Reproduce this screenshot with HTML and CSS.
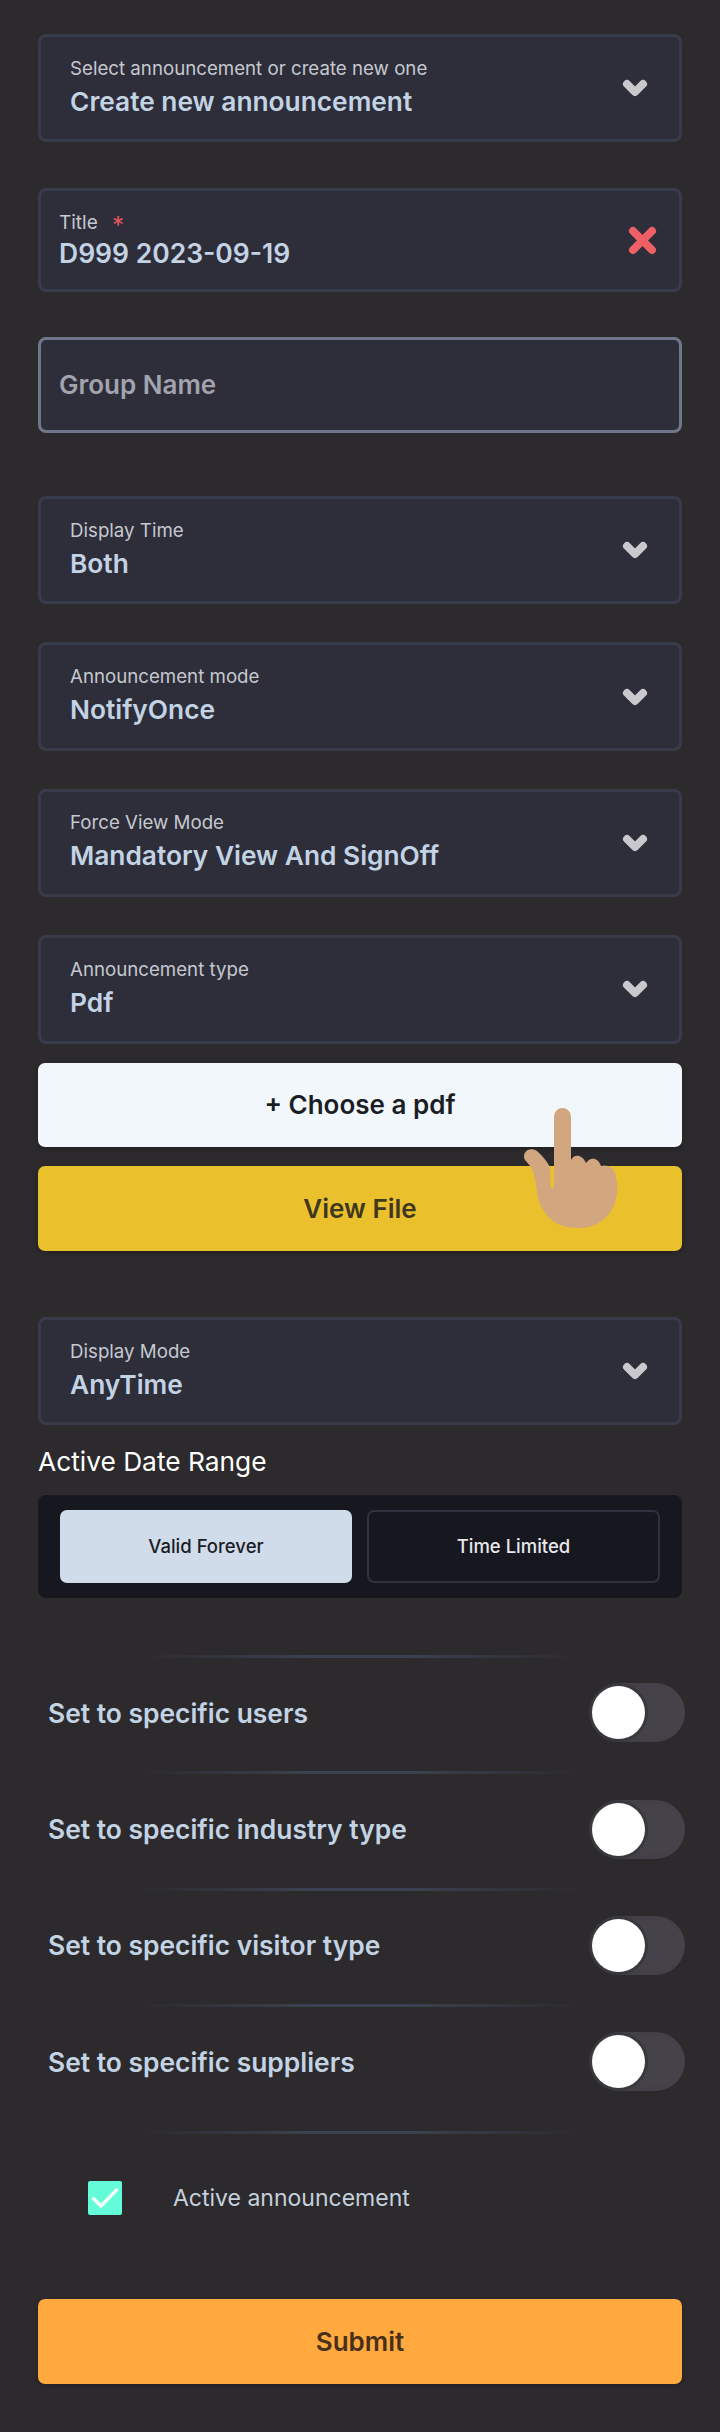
FILE: index.html
```html
<!DOCTYPE html>
<html lang="en">
<head>
<meta charset="utf-8">
<title>Announcement</title>
<link rel="stylesheet" href="styles.css">
</head>
<body>
<main class="form">
  <div class="field select">
    <div class="stack"><span class="label">Select announcement or create new one</span><span class="value">Create new announcement</span></div>
    <svg class="chev" viewBox="0 0 26 18"><path d="M5 5l8 8 8-8"/></svg>
  </div>
  <div class="field input mt45">
    <div class="stack"><span class="label">Title <span class="req">*</span></span><span class="value">D999 2023-09-19</span></div>
    <svg class="clear" viewBox="0 0 29 29"><path d="M5 5l19 19M24 5L5 24"/></svg>
  </div>
  <div class="field group mt45b"><span class="placeholder">Group Name</span></div>
  <div class="field select mt63">
    <div class="stack"><span class="label">Display Time</span><span class="value">Both</span></div>
    <svg class="chev" viewBox="0 0 26 18"><path d="M5 5l8 8 8-8"/></svg>
  </div>
  <div class="field select mt38">
    <div class="stack"><span class="label">Announcement mode</span><span class="value">NotifyOnce</span></div>
    <svg class="chev" viewBox="0 0 26 18"><path d="M5 5l8 8 8-8"/></svg>
  </div>
  <div class="field select mt38">
    <div class="stack"><span class="label">Force View Mode</span><span class="value">Mandatory View And SignOff</span></div>
    <svg class="chev" viewBox="0 0 26 18"><path d="M5 5l8 8 8-8"/></svg>
  </div>
  <div class="field select mt38">
    <div class="stack"><span class="label">Announcement type</span><span class="value">Pdf</span></div>
    <svg class="chev" viewBox="0 0 26 18"><path d="M5 5l8 8 8-8"/></svg>
  </div>
  <div class="files">
    <button class="btn choose">+ Choose a pdf</button>
    <button class="btn view">View File</button>
    <svg class="hand" viewBox="0 0 104 132"><path d="M34 16.500A8.500 8.500 0 0 1 51 16.500V60C54 54 62 54 66 63 70 57 78 57 81 66 87 64 93 67 95 73 98 82 98 93 95 102 90 118 76 128 60 128 44 128 33 124 26 114 20 106 18 100 17 92 16 82 14 74 11 67L5 60C1 52 10 46 17 51 23 56 27 62 30 67L31 88H34Z"/></svg>
  </div>
  <div class="field select mt66">
    <div class="stack"><span class="label">Display Mode</span><span class="value">AnyTime</span></div>
    <svg class="chev" viewBox="0 0 26 18"><path d="M5 5l8 8 8-8"/></svg>
  </div>
  <h2 class="heading">Active Date Range</h2>
  <div class="segment">
    <button class="seg on">Valid Forever</button>
    <button class="seg">Time Limited</button>
  </div>
  <div class="rule first"></div>
  <div class="row"><span>Set to specific users</span><span class="toggle"><i></i></span></div>
  <div class="rule"></div>
  <div class="row"><span>Set to specific industry type</span><span class="toggle"><i></i></span></div>
  <div class="rule"></div>
  <div class="row"><span>Set to specific visitor type</span><span class="toggle"><i></i></span></div>
  <div class="rule"></div>
  <div class="row"><span>Set to specific suppliers</span><span class="toggle"><i></i></span></div>
  <div class="rule last"></div>
  <label class="check">
    <span class="box"><svg viewBox="0 0 34 34"><path d="M5.500 17.500l7.500 7.500L28.500 9"/></svg></span>
    <span>Active announcement</span>
  </label>
  <button class="btn submit">Submit</button>
</main>
</body>
</html>
```
FILE: styles.css
```css
* { box-sizing: border-box; }
html, body { margin: 0; padding: 0; }
body {
  background: #2c2a2d;
  font-family: Inter, "Liberation Sans", sans-serif;
  width: 720px;
  height: 2432px;
  overflow: hidden;
}
.form { padding: 34px 38px 0; display: flex; flex-direction: column; }
.mt45 { margin-top: 45.6px; }
.mt45b { margin-top: 45px; }
.mt63 { margin-top: 63px; }
.mt38 { margin-top: 38px; }
.mt66 { margin-top: 66px; }

.field {
  background: #2d2e3a;
  border: 3px solid #383b4a;
  border-radius: 8px;
  display: flex;
  align-items: center;
  justify-content: space-between;
}
.select { height: 108.4px; padding: 0 31px 0 29px; }
.input { height: 104px; padding: 2px 22px 0 18px; }
.group { height: 96px; padding: 0 18px; border-color: #71778a; }
.stack { display: flex; flex-direction: column; }
.label { font-size: 18.7px; line-height: 24px; color: #c6c8cf; }
.value { font-size: 26.3px; line-height: 36px; font-weight: 600; color: #c3d3e4; margin-top: 3px; }
.input .label { font-size: 19px; }
.input .value { margin-top: 0; font-size: 26.5px; }
.req { color: #e2575f; margin-left: 9px; font-size: 24px; line-height: 0; vertical-align: -5px; }
.placeholder { font-size: 26px; font-weight: 600; color: #a3a3ad; }
.chev { width: 26px; height: 18px; }
.chev path { fill: none; stroke: #c9c9cd; stroke-width: 8; stroke-linecap: round; stroke-linejoin: round; }
.clear { width: 29px; height: 29px; }
.clear path { fill: none; stroke: #ef6066; stroke-width: 8; stroke-linecap: round; }

.btn {
  display: block;
  width: 100%;
  height: 84px;
  border: 0;
  border-radius: 7px;
  font-family: inherit;
  font-size: 26px;
  font-weight: 600;
  box-shadow: 0 2px 5px rgba(0, 0, 0, .25);
}
.files { position: relative; margin-top: 19.4px; display: flex; flex-direction: column; gap: 19px; }
.choose { background: #f1f7fb; color: #1b1d24; }
.view { background: #eac02d; color: #3f3720; height: 85px; }
.hand { position: absolute; left: 482px; top: 37px; width: 104px; height: 132px; }
.hand path { fill: #d2a77f; }

.heading { margin: 15.6px 0 0; font-size: 26.3px; line-height: 42px; font-weight: 400; color: #fff; }
.segment {
  margin-top: 12px;
  height: 103px;
  background: #16171f;
  border-radius: 8px;
  padding: 15px 22px;
  display: grid;
  grid-template-columns: 292px 293px;
  gap: 15px;
}
.seg {
  background: #16171f;
  border: 2px solid #30323f;
  border-radius: 7px;
  color: #e6e8ec;
  font-family: inherit;
  font-size: 18.5px;
  font-weight: 500;
  height: 73px;
}
.seg.on { background: #d1dcea; border-color: #d1dcea; color: #1b1d26; }

.rule {
  height: 3px;
  margin: 0 100px;
  background: linear-gradient(90deg, rgba(60, 66, 82, 0), #3c4252 40%, #3c4252 60%, rgba(60, 66, 82, 0));
}
.rule.first { margin-top: 57px; }
.rule.last { margin-top: 10.4px; }
.row {
  height: 113.4px;
  margin-right: -3px;
  padding: 0 0 4px 10px;
  display: flex;
  align-items: center;
  justify-content: space-between;
  font-size: 26.4px;
  font-weight: 600;
  color: #c3d3e4;
}
.toggle {
  width: 95px;
  height: 59px;
  border-radius: 30px;
  background: #454349;
  box-shadow: inset 8px 0 10px rgba(0, 0, 0, .08);
  position: relative;
  flex: none;
}
.toggle i {
  position: absolute;
  left: 2px;
  top: 3px;
  width: 53px;
  height: 53px;
  border-radius: 50%;
  background: #fff;
  box-shadow: 0 0 0 3px #38383d;
}

.check {
  margin-top: 47px;
  padding-left: 50px;
  display: flex;
  align-items: center;
  gap: 51px;
  font-size: 23px;
  font-weight: 400;
  color: #c5d0de;
  height: 34px;
}
.box { width: 34px; height: 34px; border-radius: 2px; background: #64fbd8; display: block; flex: none; }
.box svg { display: block; width: 34px; height: 34px; }
.box path { fill: none; stroke: #f2fffb; stroke-width: 3.500; stroke-linecap: round; stroke-linejoin: round; }
.submit { margin-top: 84px; height: 85px; background: #ffa93f; color: #48301a; }
```
